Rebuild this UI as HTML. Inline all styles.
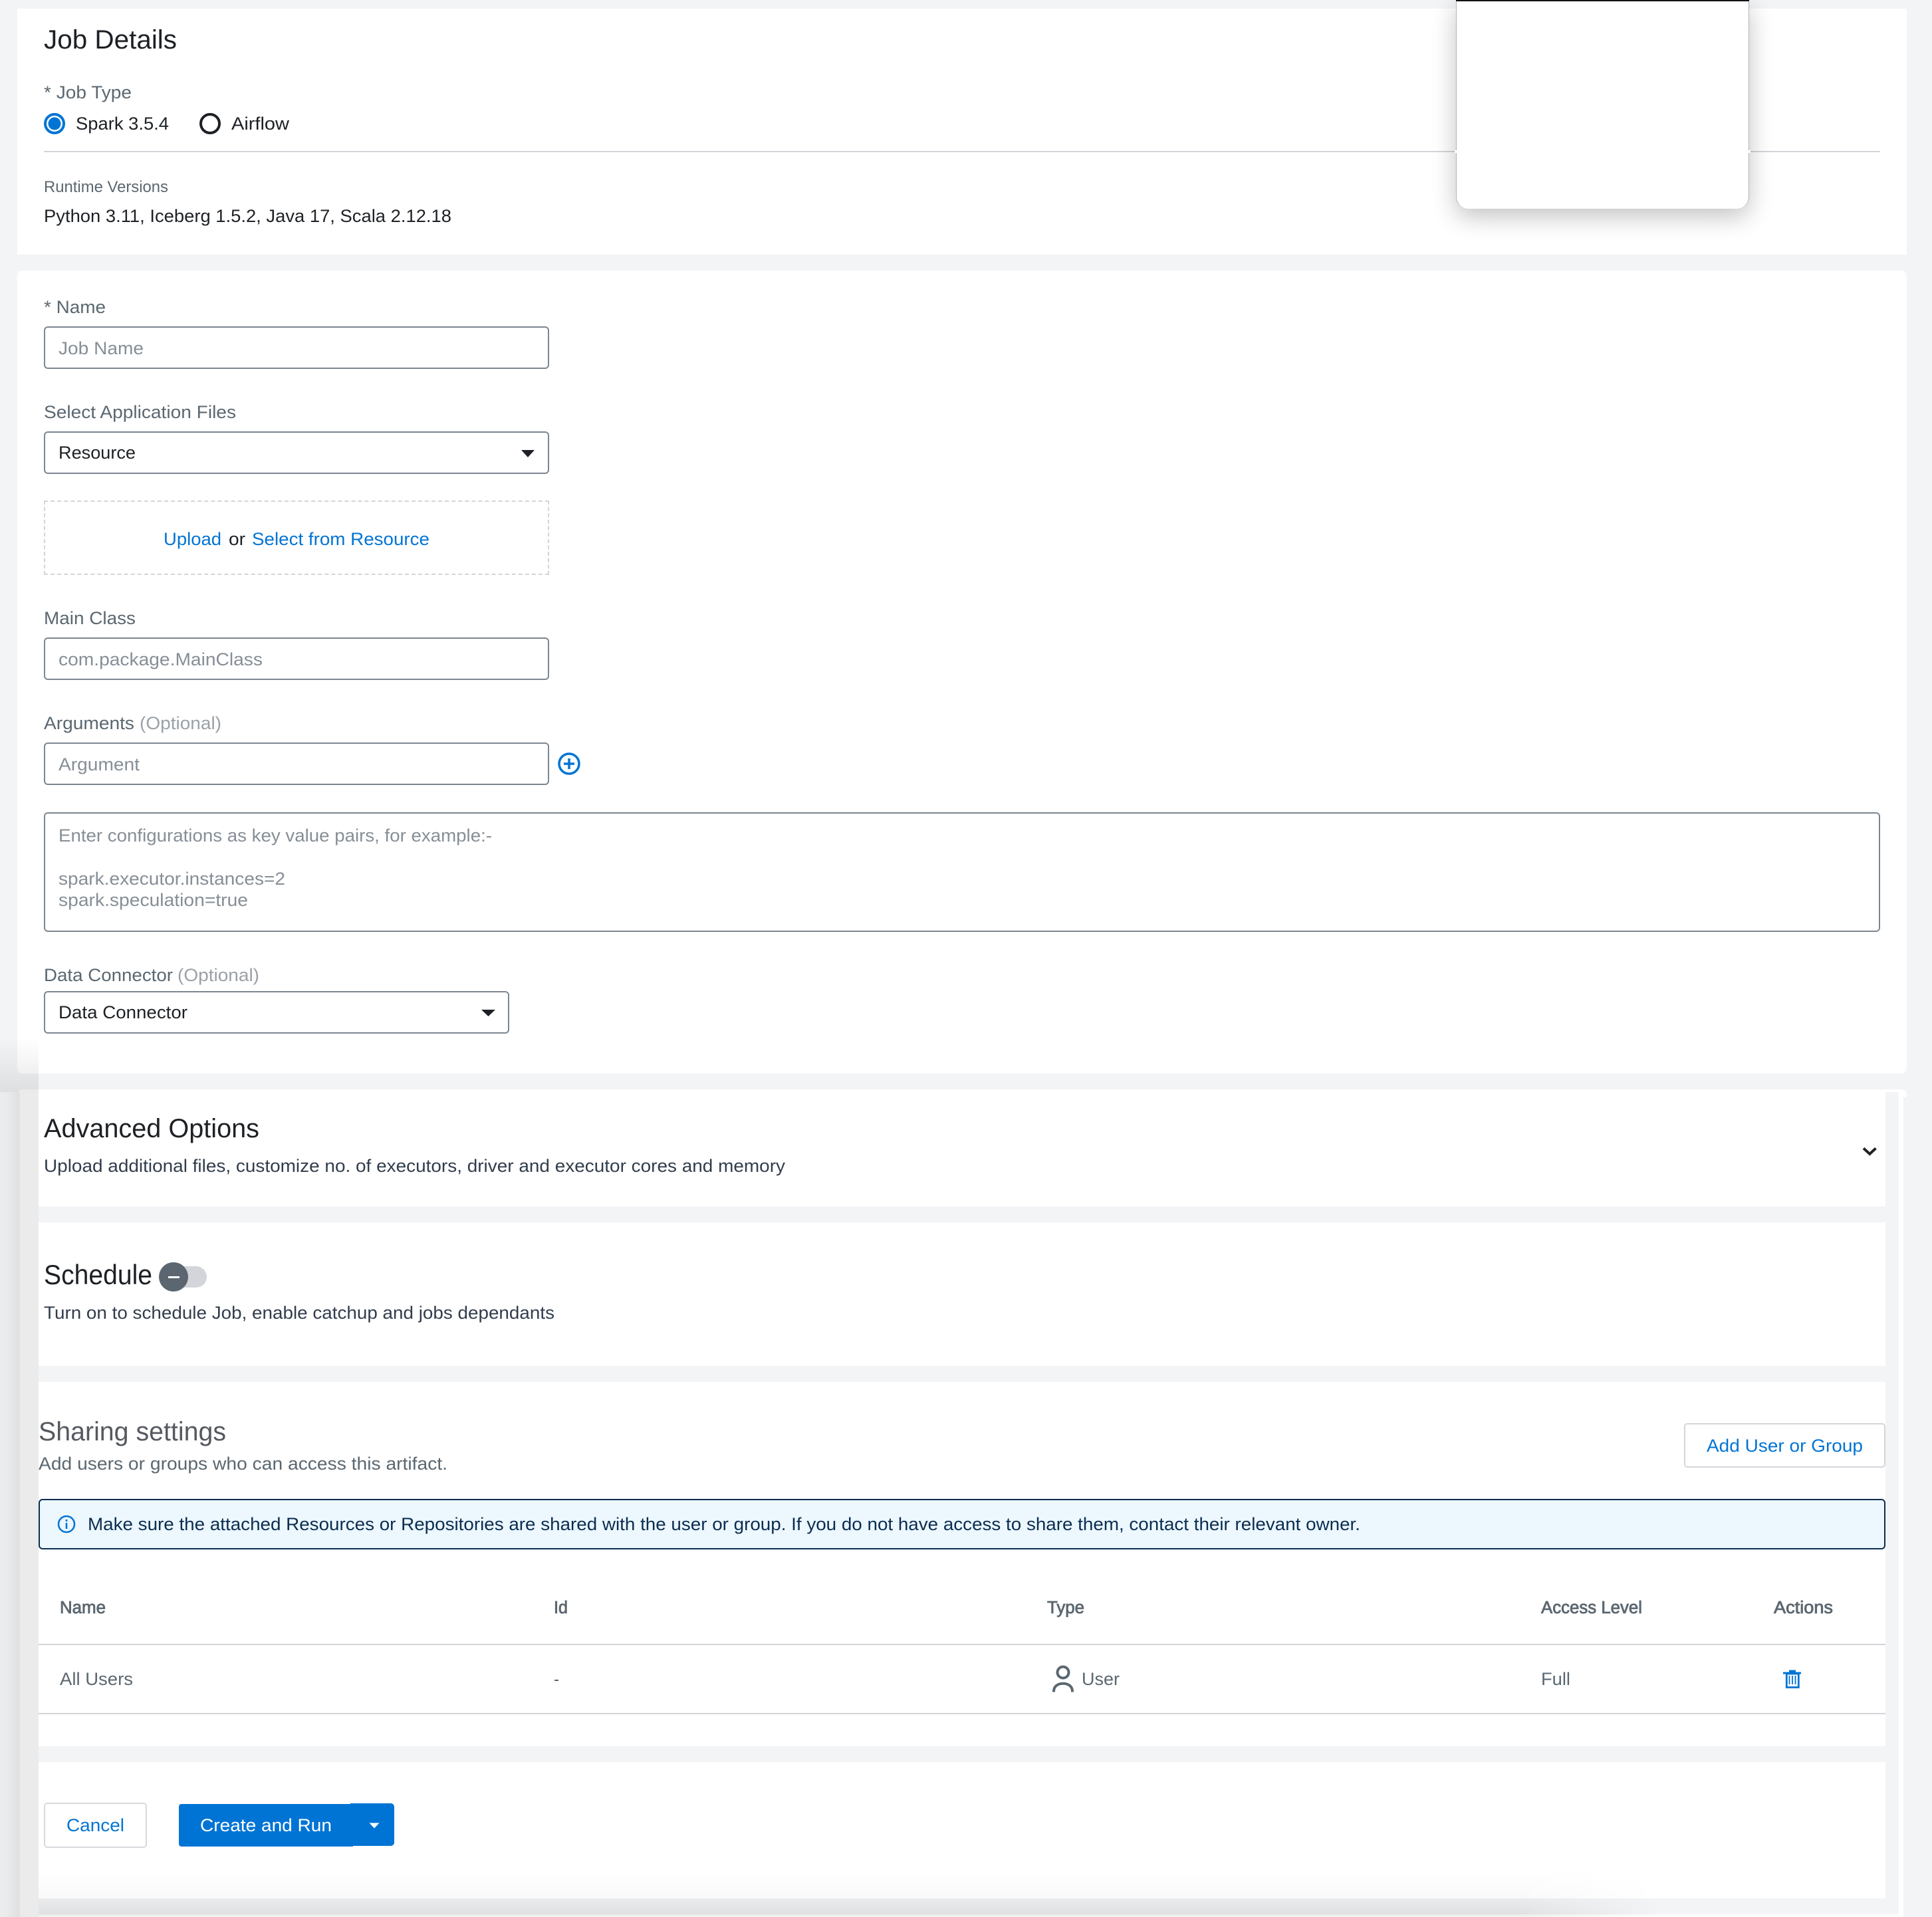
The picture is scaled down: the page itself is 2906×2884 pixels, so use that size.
<!DOCTYPE html>
<html lang="en">
<head>
<meta charset="utf-8">
<title>Job Details</title>
<style>
html,body{margin:0;padding:0;width:2906px;height:2884px;overflow:hidden;background:#f3f4f6;}
#p{position:relative;width:2906px;height:2884px;overflow:hidden;font-family:"Liberation Sans",sans-serif;background:#f3f4f6;}
#p div{position:absolute;box-sizing:border-box;}
.w{background:#fff;}
.in{border:2px solid #7c8690;border-radius:6px;background:#fff;}
svg{position:absolute;left:0;top:0;}
text{font-family:"Liberation Sans",sans-serif;font-size:27px;}
.g{fill:#5b6770;}
.d{fill:#1d2125;}
.p{fill:#868e96;}
.o{fill:#9aa1a8;}
.b{fill:#0074d4;}
.s{fill:#313d4c;}
.h{fill:#5b6770;stroke:#5b6770;stroke-width:.8px;font-size:25.5px;}
</style>
</head>
<body>
<div id="p">
  <!-- cards -->
  <div class="w" style="left:26px;top:13px;width:2842px;height:370px;"></div>
  <div class="w" style="left:26px;top:407px;width:2842px;height:1208px;border-radius:8px;"></div>
  <div style="left:66px;top:227px;width:2762px;height:2px;background:#d4d4da;"></div>

  <!-- popup -->
  <div class="w" style="left:2190px;top:0;width:441px;height:314px;border-radius:0 0 18px 18px;box-shadow:0 12px 36px rgba(0,0,0,.24);border-left:1px solid #b5b5b5;border-right:1px solid #b5b5b5;"></div>
  <div style="left:2190px;top:0;width:441px;height:2px;background:#111;"></div>
  <div class="w" style="left:2188px;top:226px;width:445px;height:4px;"></div>

  <!-- lower overlay -->
  <div class="w" style="left:26px;top:1639px;width:2842px;height:12px;border-radius:8px 8px 0 0;"></div>
  <div style="left:58px;top:1643px;width:2798px;height:1241px;background:#f3f4f6;"></div>
  <div class="w" style="left:2856px;top:1643px;width:7px;height:1241px;"></div>
  <div style="left:0;top:1643px;width:30px;height:1241px;background:linear-gradient(90deg,#eceded,#e9eaeb 12px,#dfe0e2 28px,#e3e4e5);"></div>
  <div style="left:30px;top:1643px;width:28px;height:1241px;background:#ebebec;"></div>
  <div class="w" style="left:58px;top:1639px;width:2778px;height:176px;"></div>
  <div class="w" style="left:58px;top:1839px;width:2778px;height:216px;"></div>
  <div class="w" style="left:58px;top:2079px;width:2778px;height:548px;"></div>
  <div class="w" style="left:58px;top:2651px;width:2778px;height:205px;"></div>
  <div class="w" style="left:58px;top:2880px;width:2798px;height:4px;"></div>

  <!-- shadows -->
  <div style="left:0;top:1560px;width:58px;height:83px;background:linear-gradient(180deg,rgba(0,0,0,0),rgba(0,0,0,.085));"></div>
  <div style="left:0;top:2780px;width:2906px;height:104px;background:linear-gradient(180deg,rgba(0,0,0,0),rgba(0,0,0,0) 34%,rgba(0,0,0,.022) 73%,rgba(0,0,0,.04) 74%,rgba(0,0,0,.075) 96%,rgba(0,0,0,.05));-webkit-mask-image:linear-gradient(90deg,transparent 0,transparent 58px,#000 58px,#000 2280px,transparent 2500px);mask-image:linear-gradient(90deg,transparent 0,transparent 58px,#000 58px,#000 2280px,transparent 2500px);"></div>

  <!-- inputs -->
  <div class="in" style="left:66px;top:491px;width:760px;height:64px;"></div>
  <div class="in" style="left:66px;top:649px;width:760px;height:64px;"></div>
  <div style="left:66px;top:753px;width:760px;height:112px;border:2px dashed #d4d4da;"></div>
  <div class="in" style="left:66px;top:959px;width:760px;height:64px;"></div>
  <div class="in" style="left:66px;top:1117px;width:760px;height:64px;"></div>
  <div class="in" style="left:66px;top:1222px;width:2762px;height:180px;"></div>
  <div class="in" style="left:66px;top:1491px;width:700px;height:64px;"></div>

  <!-- toggle -->
  <div style="left:255px;top:1905px;width:56px;height:32px;background:#d4d5da;border-radius:16px;"></div>
  <div style="left:239px;top:1899px;width:44px;height:44px;background:#5c6670;border-radius:50%;"></div>
  <div style="left:253px;top:1920px;width:17px;height:3px;background:#fff;"></div>

  <!-- sharing -->
  <div style="left:2533px;top:2141px;width:303px;height:67px;background:#fff;border:2px solid #d4d5da;border-radius:5px;"></div>
  <div style="left:58px;top:2255px;width:2778px;height:76px;background:#ecf7fe;border:2.5px solid #0b2d50;border-radius:6px;"></div>
  <div style="left:58px;top:2473px;width:2778px;height:2px;background:#d4d4da;"></div>
  <div style="left:58px;top:2577px;width:2778px;height:2px;background:#d4d4da;"></div>

  <!-- buttons -->
  <div style="left:66px;top:2712px;width:155px;height:68px;background:#fff;border:2px solid #d8d9dd;border-radius:5px;"></div>
  <div style="left:269px;top:2714px;width:262px;height:64px;background:#0074d4;border-radius:4px 0 0 4px;"></div>
  <div style="left:527px;top:2713px;width:66px;height:64px;background:#0074d4;border-radius:0 5px 5px 0;"></div>

  <svg width="2906" height="2884" viewBox="0 0 2906 2884" xmlns="http://www.w3.org/2000/svg">
    <text x="66" y="73" class="d" style="font-size:40px" textLength="200" lengthAdjust="spacingAndGlyphs">Job Details</text>
    <text x="66" y="148" class="g" textLength="132" lengthAdjust="spacingAndGlyphs">* Job Type</text>
    <text x="114" y="195" class="d" textLength="140" lengthAdjust="spacingAndGlyphs">Spark 3.5.4</text>
    <text x="348" y="195" class="d" textLength="87" lengthAdjust="spacingAndGlyphs">Airflow</text>
    <text x="66" y="289" class="g" style="font-size:24px" textLength="187" lengthAdjust="spacingAndGlyphs">Runtime Versions</text>
    <text x="66" y="334" class="d" textLength="613" lengthAdjust="spacingAndGlyphs">Python 3.11, Iceberg 1.5.2, Java 17, Scala 2.12.18</text>

    <text x="66" y="471" class="g" textLength="93" lengthAdjust="spacingAndGlyphs">* Name</text>
    <text x="88" y="533" class="p" textLength="128" lengthAdjust="spacingAndGlyphs">Job Name</text>
    <text x="66" y="629" class="g" textLength="289" lengthAdjust="spacingAndGlyphs">Select Application Files</text>
    <text x="88" y="690" class="d" textLength="116" lengthAdjust="spacingAndGlyphs">Resource</text>

    <text x="246" y="820" class="b" textLength="87" lengthAdjust="spacingAndGlyphs">Upload</text>
    <text x="344" y="820" class="d" textLength="25" lengthAdjust="spacingAndGlyphs">or</text>
    <text x="379" y="820" class="b" textLength="267" lengthAdjust="spacingAndGlyphs">Select from Resource</text>

    <text x="66" y="939" class="g" textLength="138" lengthAdjust="spacingAndGlyphs">Main Class</text>
    <text x="88" y="1001" class="p" textLength="307" lengthAdjust="spacingAndGlyphs">com.package.MainClass</text>

    <text x="66" y="1097" class="g" textLength="136" lengthAdjust="spacingAndGlyphs">Arguments</text>
    <text x="210" y="1097" class="o" textLength="123" lengthAdjust="spacingAndGlyphs">(Optional)</text>
    <text x="88" y="1159" class="p" textLength="122" lengthAdjust="spacingAndGlyphs">Argument</text>

    <text x="88" y="1266" class="p" textLength="652" lengthAdjust="spacingAndGlyphs">Enter configurations as key value pairs, for example:-</text>
    <text x="88" y="1331" class="p" textLength="341" lengthAdjust="spacingAndGlyphs">spark.executor.instances=2</text>
    <text x="88" y="1363" class="p" textLength="285" lengthAdjust="spacingAndGlyphs">spark.speculation=true</text>

    <text x="66" y="1476" class="g" textLength="194" lengthAdjust="spacingAndGlyphs">Data Connector</text>
    <text x="267" y="1476" class="o" textLength="123" lengthAdjust="spacingAndGlyphs">(Optional)</text>
    <text x="88" y="1532" class="d" textLength="194" lengthAdjust="spacingAndGlyphs">Data Connector</text>

    <text x="66" y="1711" class="d" style="font-size:40px" textLength="324" lengthAdjust="spacingAndGlyphs">Advanced Options</text>
    <text x="66" y="1763" class="s" textLength="1115" lengthAdjust="spacingAndGlyphs">Upload additional files, customize no. of executors, driver and executor cores and memory</text>

    <text x="66" y="1932" class="d" style="font-size:42px" textLength="163" lengthAdjust="spacingAndGlyphs">Schedule</text>
    <text x="66" y="1984" class="s" textLength="768" lengthAdjust="spacingAndGlyphs">Turn on to schedule Job, enable catchup and jobs dependants</text>

    <text x="58" y="2167" style="font-size:40px;fill:#555a60" textLength="282" lengthAdjust="spacingAndGlyphs">Sharing settings</text>
    <text x="58" y="2211" class="g" textLength="615" lengthAdjust="spacingAndGlyphs">Add users or groups who can access this artifact.</text>
    <text x="2567" y="2184" class="b" textLength="235" lengthAdjust="spacingAndGlyphs">Add User or Group</text>

    <text x="132" y="2302" style="fill:#0b2d50" textLength="1914" lengthAdjust="spacingAndGlyphs">Make sure the attached Resources or Repositories are shared with the user or group. If you do not have access to share them, contact their relevant owner.</text>

    <text x="90" y="2427" class="h" textLength="69" lengthAdjust="spacingAndGlyphs">Name</text>
    <text x="833" y="2427" class="h" textLength="21" lengthAdjust="spacingAndGlyphs">Id</text>
    <text x="1575" y="2427" class="h" textLength="56" lengthAdjust="spacingAndGlyphs">Type</text>
    <text x="2318" y="2427" class="h" textLength="152" lengthAdjust="spacingAndGlyphs">Access Level</text>
    <text x="2668" y="2427" class="h" textLength="89" lengthAdjust="spacingAndGlyphs">Actions</text>

    <text x="90" y="2535" class="g" textLength="110" lengthAdjust="spacingAndGlyphs">All Users</text>
    <text x="833" y="2535" class="g" textLength="8" lengthAdjust="spacingAndGlyphs">-</text>
    <text x="1627" y="2535" class="g" textLength="57" lengthAdjust="spacingAndGlyphs">User</text>
    <text x="2318" y="2535" class="g" textLength="44" lengthAdjust="spacingAndGlyphs">Full</text>

    <text x="100" y="2755" class="b" textLength="87" lengthAdjust="spacingAndGlyphs">Cancel</text>
    <text x="301" y="2755" style="fill:#fff" textLength="198" lengthAdjust="spacingAndGlyphs">Create and Run</text>

    <!-- radios -->
    <circle cx="82" cy="186" r="14" fill="#fff" stroke="#0074d4" stroke-width="4"/>
    <circle cx="82" cy="186" r="9.500" fill="#0074d4"/>
    <circle cx="316" cy="186" r="14" fill="#fff" stroke="#1d2125" stroke-width="4"/>

    <!-- select arrows -->
    <path d="M784 677H804L794 688Z" fill="#1d2125"/>
    <path d="M724 1519H745L734.500 1529Z" fill="#1d2125"/>

    <!-- plus -->
    <circle cx="856" cy="1149" r="15" fill="none" stroke="#0074d4" stroke-width="3.500"/>
    <path d="M856 1141V1157M848 1149H864" stroke="#0074d4" stroke-width="3.500" fill="none"/>

    <!-- chevron -->
    <path d="M2803 1727.500L2812.300 1736L2821.500 1727.500" fill="none" stroke="#222" stroke-width="4"/>

    <!-- info -->
    <circle cx="100" cy="2293" r="12" fill="none" stroke="#0074d4" stroke-width="2.500"/>
    <rect x="98.700" y="2286" width="2.600" height="3" fill="#0074d4"/>
    <rect x="98.700" y="2291" width="2.600" height="9" fill="#0074d4"/>

    <!-- user -->
    <circle cx="1599" cy="2516" r="8.500" fill="none" stroke="#5b6770" stroke-width="4"/>
    <path d="M1585 2545.500V2544.500C1585 2537 1591 2532.700 1599 2532.700C1607 2532.700 1613 2537 1613 2544.500V2545.500" fill="none" stroke="#5b6770" stroke-width="4"/>

    <!-- trash -->
    <rect x="2691" y="2512.500" width="10" height="3.500" fill="#0074d4"/>
    <rect x="2682" y="2515.500" width="27" height="3" fill="#0074d4"/>
    <rect x="2687.300" y="2518" width="18" height="20.500" fill="#fff" stroke="#0074d4" stroke-width="2.800"/>
    <path d="M2691.500 2521V2534M2696 2521V2534M2700.500 2521V2534" stroke="#0074d4" stroke-width="1.800" fill="none"/>

    <!-- button arrow -->
    <path d="M555.500 2742.500H570.500L563 2750.500Z" fill="#fff"/>
  </svg>
</div>
</body>
</html>
